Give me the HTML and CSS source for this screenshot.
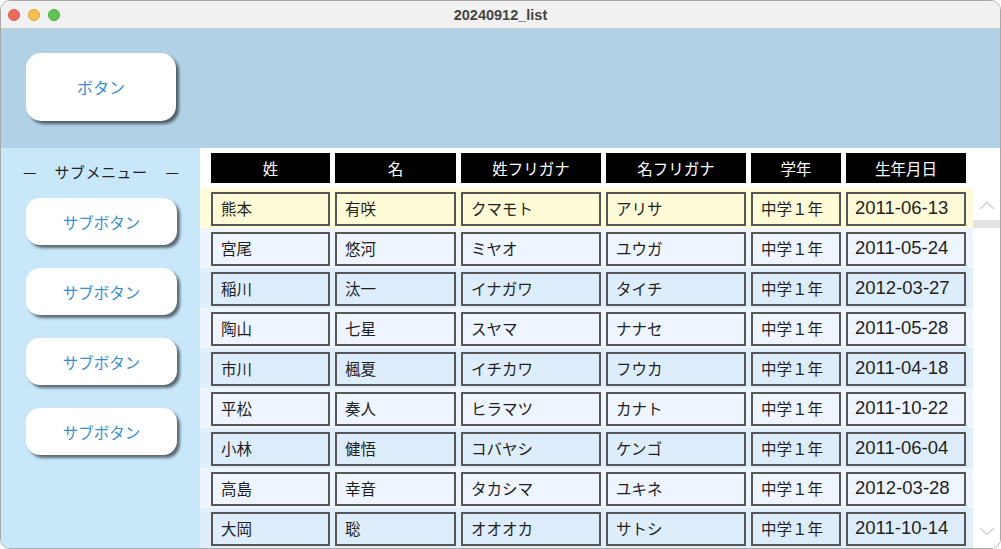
FILE: index.html
```html
<!DOCTYPE html>
<html lang="ja">
<head>
<meta charset="utf-8">
<title>20240912_list</title>
<link rel="stylesheet" href="styles.css">
</head>
<body>
<div class="window">
  <div class="titlebar">
    <div class="lights"><span class="light red"></span><span class="light yellow"></span><span class="light green"></span></div>
    <div class="title">20240912_list</div>
    <div class="spacer"></div>
  </div>
  <div class="top">
    <button class="btn big">ボタン</button>
  </div>
  <div class="main">
    <aside class="side">
      <div class="side-title"><span>—</span><span>サブメニュー</span><span>—</span></div>
      <button class="btn sub">サブボタン</button>
      <button class="btn sub">サブボタン</button>
      <button class="btn sub">サブボタン</button>
      <button class="btn sub">サブボタン</button>
    </aside>
    <section class="table-area">
      <div class="rows">
        <div class="row head">
          <div class="c w1">姓</div><div class="c w2">名</div><div class="c w3">姓フリガナ</div><div class="c w4">名フリガナ</div><div class="c w5">学年</div><div class="c w6">生年月日</div>
        </div>
        <div class="row sel">
          <div class="c w1">熊本</div><div class="c w2">有咲</div><div class="c w3">クマモト</div><div class="c w4">アリサ</div><div class="c w5">中学１年</div><div class="c w6 d">2011-06-13</div>
        </div>
        <div class="row even">
          <div class="c w1">宮尾</div><div class="c w2">悠河</div><div class="c w3">ミヤオ</div><div class="c w4">ユウガ</div><div class="c w5">中学１年</div><div class="c w6 d">2011-05-24</div>
        </div>
        <div class="row odd">
          <div class="c w1">稲川</div><div class="c w2">汰一</div><div class="c w3">イナガワ</div><div class="c w4">タイチ</div><div class="c w5">中学１年</div><div class="c w6 d">2012-03-27</div>
        </div>
        <div class="row even">
          <div class="c w1">陶山</div><div class="c w2">七星</div><div class="c w3">スヤマ</div><div class="c w4">ナナセ</div><div class="c w5">中学１年</div><div class="c w6 d">2011-05-28</div>
        </div>
        <div class="row odd">
          <div class="c w1">市川</div><div class="c w2">楓夏</div><div class="c w3">イチカワ</div><div class="c w4">フウカ</div><div class="c w5">中学１年</div><div class="c w6 d">2011-04-18</div>
        </div>
        <div class="row even">
          <div class="c w1">平松</div><div class="c w2">奏人</div><div class="c w3">ヒラマツ</div><div class="c w4">カナト</div><div class="c w5">中学１年</div><div class="c w6 d">2011-10-22</div>
        </div>
        <div class="row odd">
          <div class="c w1">小林</div><div class="c w2">健悟</div><div class="c w3">コバヤシ</div><div class="c w4">ケンゴ</div><div class="c w5">中学１年</div><div class="c w6 d">2011-06-04</div>
        </div>
        <div class="row even">
          <div class="c w1">高島</div><div class="c w2">幸音</div><div class="c w3">タカシマ</div><div class="c w4">ユキネ</div><div class="c w5">中学１年</div><div class="c w6 d">2012-03-28</div>
        </div>
        <div class="row odd">
          <div class="c w1">大岡</div><div class="c w2">聡</div><div class="c w3">オオオカ</div><div class="c w4">サトシ</div><div class="c w5">中学１年</div><div class="c w6 d">2011-10-14</div>
        </div>
      </div>
      <div class="scroll">
        <svg class="chev" width="16" height="9" viewBox="0 0 16 9"><path d="M1 8 L8 1.5 L15 8" fill="none" stroke="#d0d0d0" stroke-width="1.3"/></svg>
        <div class="thumb"></div>
        <svg class="chev down" width="16" height="9" viewBox="0 0 16 9"><path d="M1 1 L8 7.5 L15 1" fill="none" stroke="#d0d0d0" stroke-width="1.3"/></svg>
      </div>
    </section>
  </div>
</div>
</body>
</html>
```

FILE: styles.css
```css
* { box-sizing: border-box; }
html, body { margin: 0; padding: 0; background: #ffffff; }
body { font-family: "Noto Sans CJK JP", "Noto Sans", sans-serif; }

.window {
  width: 1001px;
  height: 549px;
  border: 1px solid #a9a9a9;
  border-radius: 10px;
  overflow: hidden;
  display: flex;
  flex-direction: column;
  background: #ffffff;
}

.titlebar {
  height: 28px;
  flex: none;
  display: flex;
  align-items: center;
  background: #f1f1f1;
  border-bottom: 1px solid #cfcfcf;
}
.lights { width: 64px; display: flex; gap: 8px; padding-left: 7px; }
.light { width: 12px; height: 12px; border-radius: 50%; display: block; }
.red { background: #ee6a5f; border: 0.5px solid #d65a50; }
.yellow { background: #f5bf4f; border: 0.5px solid #d9a53e; }
.green { background: #61c554; border: 0.5px solid #52a844; }
.title {
  flex: 1;
  text-align: center;
  font-family: "Liberation Sans", Arial, sans-serif;
  font-weight: bold;
  font-size: 14.5px;
  color: #444444;
}
.spacer { width: 64px; }

.top {
  height: 119px;
  flex: none;
  background: #b0d1e6;
  padding: 24px 0 0 25px;
}

.btn {
  display: block;
  background: #ffffff;
  border: none;
  color: #3a8ed0;
  font-family: "Noto Sans CJK JP", sans-serif;
  font-size: 16px;
  box-shadow: 3px 3px 3px rgba(0, 0, 0, 0.55);
  padding: 0;
}
.big { width: 150px; height: 68px; border-radius: 15px; }

.main { flex: 1; display: flex; min-height: 0; }

.side {
  width: 199px;
  flex: none;
  background: #c8e8fa;
  display: flex;
  flex-direction: column;
  align-items: flex-start;
  padding: 12px 0 0 25px;
}
.side-title {
  width: 156px;
  margin-left: -3px;
  display: flex;
  justify-content: space-between;
  font-size: 15px;
  color: #222222;
  line-height: 24px;
  margin-bottom: 14px;
}
.side-title span:nth-child(2) { letter-spacing: 0.5px; }
.sub {
  width: 151px;
  height: 47px;
  border-radius: 14px;
  font-size: 15.5px;
  margin-bottom: 23px;
}

.table-area { flex: 1; display: flex; background: #ffffff; }
.rows { width: 773px; flex: none; }
.row {
  height: 40px;
  display: flex;
  gap: 5px;
  padding: 4px 0 0 11px;
}
.row.head { padding-top: 5px; background: #ffffff; }
.c {
  height: 34px;
  border: 2px solid #565656;
  padding: 0 0 2px 8px;
  font-size: 15.5px;
  line-height: 28px;
  color: #1e1e1e;
  white-space: nowrap;
}
.c.d {
  font-family: "Liberation Sans", Arial, sans-serif;
  font-size: 18.5px;
  padding-left: 7px;
}
.head .c {
  height: 30px;
  border: none;
  background: #000000;
  color: #ffffff;
  text-align: center;
  padding: 0;
  line-height: 30px;
  font-size: 15.5px;
}
.w1 { width: 119px; }
.w2 { width: 121px; }
.w3 { width: 140px; }
.w4 { width: 140px; }
.w5 { width: 90px; }
.w6 { width: 120px; }

.sel { background: #fffbdb; }
.sel .c { background: #fffbd6; }
.even { background: #eef5fe; }
.even .c { background: #eef5fe; }
.odd { background: #e0eefc; }
.odd .c { background: #deedfc; }

.scroll {
  flex: 1;
  background: #ffffff;
  display: flex;
  flex-direction: column;
  align-items: flex-start;
  padding-top: 53px;
}
.chev { display: block; margin-left: 6px; }
.thumb {
  width: 27px;
  height: 8px;
  background: #e3e3e3;
  margin-top: 10px;
}
.chev.down { margin-top: auto; margin-bottom: 12px; }
```
